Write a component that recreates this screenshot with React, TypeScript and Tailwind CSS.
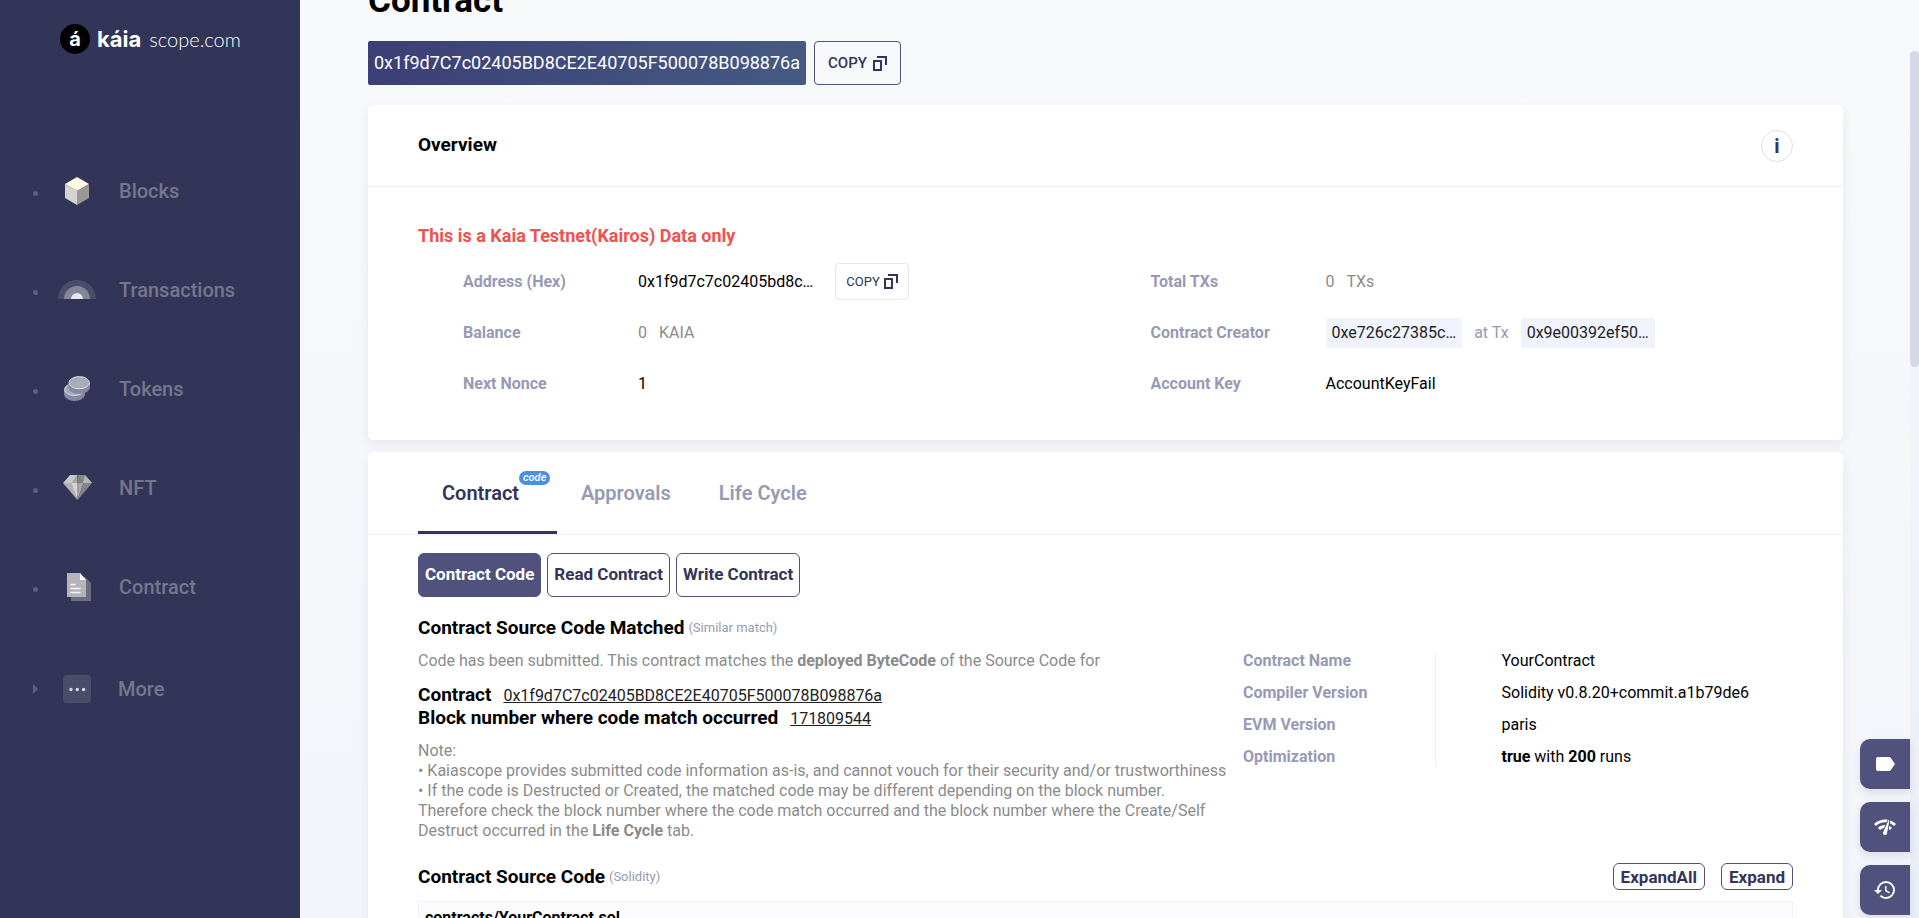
import React from "react";
import { MdHistory, MdLabel, MdNetworkCheck } from "react-icons/md";

const HASH = "0x1f9d7C7c02405BD8CE2E40705F500078B098876a";

function Logo() {
  return (
    <a href="#home" aria-label="kaiascope.com" className="flex h-[30px] items-center text-white">
      <span className="flex size-[30px] items-center justify-center rounded-full bg-black">
        <span className="font-[Inter] text-xl leading-6 font-bold">á</span>
      </span>
      <span className="ml-[7px] font-[Inter] text-[22px] leading-6 font-bold">káia</span>
      <span className="ml-2 font-[Lato] text-xl leading-6 font-light">scope.com</span>
    </a>
  );
}

function BlockIcon() {
  return (
    <svg width="24" height="28" viewBox="0 0 24 28">
      <path d="M12 0 24 7 12 14 0 7Z" fill="#fff8e3" />
      <path d="M0 7 12 14V28L0 21Z" fill="#d4d3d1" />
      <path d="M24 7 12 14V28L24 21Z" fill="#999896" />
    </svg>
  );
}

function TransactionIcon() {
  return (
    <svg width="38" height="20" viewBox="0 0 38 20">
      <path d="M0 19a19 19 0 0 1 38 0Z" fill="#4b4e6b" />
      <path d="M6 19a13 13 0 0 1 26 0Z" fill="#84869a" />
      <path d="M13 19a6 6 0 0 1 12 0Z" fill="#e6e6ea" />
    </svg>
  );
}

function TokenIcon() {
  return (
    <svg width="26" height="25" viewBox="0 0 26 25">
      <path d="M0 14v4c0 4 5 7 10.500 7S21 22 21 18v-4Z" fill="#8688a0" />
      <ellipse cx="10.500" cy="13.500" rx="10" ry="6" fill="#a9abbb" stroke="#dcdce3" />
      <path d="M4.500 7v4c0 4 4.500 7 10.500 7s11-3 11-7V7Z" fill="#8688a0" />
      <ellipse cx="15.200" cy="6.700" rx="10.200" ry="6.100" fill="#a9abbb" stroke="#dcdce3" />
    </svg>
  );
}

function GemIcon() {
  return (
    <svg width="29" height="25" viewBox="0 0 29 25">
      <path d="M7 0 0 8h9L14.500 0Z" fill="#c9c9c9" />
      <path d="M14.500 0H22l7 8h-9Z" fill="#8a8a8a" />
      <path d="M22 0 29 8h-9Z" fill="#b5b5b5" />
      <path d="M14.500 0 8.500 8h6Z" fill="#a9a9a9" />
      <path d="M14.500 0 20.500 8h-6Z" fill="#7f7f7f" />
      <path d="M0 8h9l5.500 17Z" fill="#b3b3b3" />
      <path d="M8.500 8h6v17Z" fill="#d6d6d6" />
      <path d="M20.500 8h-6v17Z" fill="#a6a6a6" />
      <path d="M29 8h-8.500l-6 17Z" fill="#858585" />
    </svg>
  );
}

function DocumentIcon() {
  return (
    <svg width="28" height="28" viewBox="-4 0 28 28">
      <path d="M4 4h14l6 6v18H4Z" fill="#6b6d83" />
      <path d="M0 0h13l6 7v17H0Z" fill="#b4b4ba" />
      <path d="M13 0l6 7h-6Z" fill="#fff" />
      <path d="M4 11.500h4M4 15.500h9M4 19.500h9" stroke="#f4f4f6" strokeWidth="1.500" strokeLinecap="round" />
    </svg>
  );
}

function MoreIcon() {
  return (
    <svg width="28" height="28" viewBox="0 0 28 28">
      <rect width="28" height="28" rx="4" fill="#4a4d6a" />
      <circle cx="8" cy="14.500" r="1.700" fill="#d9dae1" />
      <circle cx="14.300" cy="14.500" r="1.700" fill="#d9dae1" />
      <circle cx="20.600" cy="14.500" r="1.700" fill="#d9dae1" />
    </svg>
  );
}

const NAV = [
  { label: "Blocks", icon: <BlockIcon /> },
  { label: "Transactions", icon: <TransactionIcon /> },
  { label: "Tokens", icon: <TokenIcon /> },
  { label: "NFT", icon: <GemIcon /> },
  { label: "Contract", icon: <DocumentIcon /> },
];

function Sidebar() {
  return (
    <aside className="w-[300px] shrink-0 bg-[#323557]">
      <div className="pt-6 pl-[60px]">
        <Logo />
      </div>
      <nav className="mt-[87px] pl-[33px] text-xl font-medium text-[#75778d]">
        <ul>
          {NAV.map((item) => (
            <li key={item.label}>
              <a href="#nav" className="flex h-[99px] items-center">
                <span className="mt-1.5 size-[5px] rounded-full bg-[#5e607b]" />
                <span className="ml-5 flex w-[38px] justify-center">{item.icon}</span>
                <span className="ml-[23px]">{item.label}</span>
              </a>
            </li>
          ))}
          <li>
            <button type="button" className="flex h-[106px] items-center">
              <svg width="5" height="10" viewBox="0 0 5 10">
                <path d="M0 0 5 5 0 10Z" fill="#5e607b" />
              </svg>
              <span className="ml-5 flex w-[38px] justify-center">
                <MoreIcon />
              </span>
              <span className="ml-[22px]">More</span>
            </button>
          </li>
        </ul>
      </nav>
    </aside>
  );
}

function CopyIcon() {
  return (
    <svg width="14" height="15" viewBox="0 0 14 15" fill="none" stroke="#323557" strokeWidth="2">
      <rect x="1" y="5" width="7" height="9" />
      <path d="M4 1h9v8" />
    </svg>
  );
}

function Row({ label, children }: { label: string; children: React.ReactNode }) {
  return (
    <div className="flex h-[51px] items-center">
      <dt className="w-[175px] font-bold text-[#979ab4]">{label}</dt>
      <dd className="flex items-center text-black">{children}</dd>
    </div>
  );
}

function Overview() {
  return (
    <section className="rounded-md bg-white pb-[31px] shadow-[0_4px_12px_rgba(50,53,87,0.08)]">
      <header className="flex h-[82px] items-center justify-between border-b border-[#eff0f2] px-[50px]">
        <h2 className="text-[19px] font-bold">Overview</h2>
        <button
          type="button"
          aria-label="Information"
          className="flex size-8 items-center justify-center rounded-full border border-[#e0e1e8] text-xl font-bold text-[#323557]"
        >
          i
        </button>
      </header>
      <div className="px-[50px] pt-[37px]">
        <p className="mb-2 text-lg leading-6 font-bold text-[#f0524f]">This is a Kaia Testnet(Kairos) Data only</p>
        <div className="grid grid-cols-2">
          <dl className="pl-[45px]">
            <Row label="Address (Hex)">
              0x1f9d7c7c02405bd8c…
              <button
                type="button"
                className="ml-[22px] flex h-[37px] items-center gap-1 rounded-sm border border-[#e4e4f2] px-2.5 text-[13px] text-[#323557]"
              >
                COPY
                <CopyIcon />
              </button>
            </Row>
            <Row label="Balance">
              <span className="text-[#8b8b8b]">0</span>
              <span className="ml-3 text-[#8b8b8b]">KAIA</span>
            </Row>
            <Row label="Next Nonce">1</Row>
          </dl>
          <dl className="pl-[45px]">
            <Row label="Total TXs">
              <span className="text-[#8b8b8b]">0</span>
              <span className="ml-3 text-[#8b8b8b]">TXs</span>
            </Row>
            <Row label="Contract Creator">
              <a href="#creator" className="rounded-xs bg-[#f0f2fc] px-1.5 leading-[30px] text-[#222]">
                0xe726c27385c…
              </a>
              <span className="mx-3 text-[#979ab4]">at Tx</span>
              <a href="#tx" className="rounded-xs bg-[#f0f2fc] px-1.5 leading-[30px] text-[#222]">
                0x9e00392ef50…
              </a>
            </Row>
            <Row label="Account Key">AccountKeyFail</Row>
          </dl>
        </div>
      </div>
    </section>
  );
}

function Tabs() {
  return (
    <div role="tablist" className="flex h-[83px] border-b border-[#eff0f2] px-[50px] text-xl font-semibold">
      <button
        type="button"
        role="tab"
        aria-selected="true"
        className="relative w-[139px] border-b-3 border-[#323557] pt-[3px] pl-6 text-left text-[#323557]"
      >
        Contract
        <span className="absolute top-[19px] left-[101px] rounded-full bg-[#4a90e2] px-1 text-[11px] leading-[14px] font-medium text-white italic">
          code
        </span>
      </button>
      <button type="button" role="tab" aria-selected="false" className="px-6 text-[#979ab4]">
        Approvals
      </button>
      <button type="button" role="tab" aria-selected="false" className="px-6 text-[#979ab4]">
        Life Cycle
      </button>
    </div>
  );
}

const DETAILS: [string, React.ReactNode][] = [
  ["Contract Name", "YourContract"],
  ["Compiler Version", "Solidity v0.8.20+commit.a1b79de6"],
  ["EVM Version", "paris"],
  [
    "Optimization",
    <>
      <b>true</b> with <b>200</b> runs
    </>,
  ],
];

function ContractCard() {
  return (
    <section className="mt-3 rounded-md bg-white pb-10 shadow-[0_4px_12px_rgba(50,53,87,0.08)]">
      <Tabs />
      <div className="px-[50px] pt-[18px]">
        <div className="flex gap-1.5 text-[17px] font-bold text-[#323557]">
          <button type="button" className="h-11 rounded-md border border-[#50517d] bg-[#50517d] px-1.5 text-white">
            Contract Code
          </button>
          <button type="button" className="h-11 rounded-md border border-[#50517d] px-1.5">
            Read Contract
          </button>
          <button type="button" className="h-11 rounded-md border border-[#50517d] px-1.5">
            Write Contract
          </button>
        </div>

        <h3 className="mt-[19px] flex items-center text-[19px] leading-6 font-bold">
          Contract Source Code Matched
          <small className="ml-1 text-[13px] font-normal text-[#979ab4]">(Similar match)</small>
        </h3>

        <div className="mt-[11px] flex">
          <div className="w-3/5 text-[#8b8b8b]">
            <p className="leading-5">
              Code has been submitted. This contract matches the <b>deployed ByteCode</b> of the Source Code for
            </p>
            <div className="mt-3 text-[19px] leading-[23px] font-bold text-black">
              <p>
                Contract
                <a href="#contract" className="ml-3 text-base leading-none font-normal text-[#222] underline">
                  {HASH}
                </a>
              </p>
              <p>
                Block number where code match occurred
                <a href="#block" className="ml-3 text-base leading-none font-normal text-[#222] underline">
                  171809544
                </a>
              </p>
            </div>
            <div className="mt-3 leading-5 whitespace-nowrap">
              <p>Note:</p>
              <p>• Kaiascope provides submitted code information as-is, and cannot vouch for their security and/or trustworthiness</p>
              <p>• If the code is Destructed or Created, the matched code may be different depending on the block number.</p>
              <p>
                Therefore check the block number where the code match occurred and the block number where the Create/Self
                <br />
                Destruct occurred in the <b>Life Cycle</b> tab.
              </p>
            </div>
          </div>
          <dl className="w-2/5 text-base">
            {DETAILS.map(([name, value]) => (
              <div key={name} className="group flex">
                <dt className="w-[35%] border-r border-[#eff0f2] pb-3 leading-5 font-bold text-[#979ab4] group-last:pb-0">
                  {name}
                </dt>
                <dd className="pl-[66px] leading-5 text-black">{value}</dd>
              </div>
            ))}
          </dl>
        </div>

        <div className="mt-[22px] flex items-center">
          <h3 className="flex items-center text-[19px] leading-6 font-bold">
            Contract Source Code
            <small className="ml-1 text-[13px] font-normal text-[#979ab4]">(Solidity)</small>
          </h3>
          <div className="ml-auto flex gap-4 text-[17px] font-bold text-[#323557]">
            <button type="button" className="h-[27px] rounded-md border border-[#50517d] px-[7px] leading-6">
              ExpandAll
            </button>
            <button type="button" className="h-[27px] rounded-md border border-[#50517d] px-[7px] leading-6">
              Expand
            </button>
          </div>
        </div>

        <div className="mt-[11px] border border-[#f0f1fa] bg-[#fcfcfe] px-1.5 pt-1 pb-40">
          <h4 className="text-base leading-6 font-bold">contracts/YourContract.sol</h4>
        </div>
      </div>
    </section>
  );
}

function SideTools() {
  const style =
    "flex size-[50px] items-center justify-center rounded-l-[10px] bg-[#50517d] text-2xl text-white shadow-[0_4px_8px_rgba(50,53,87,0.12)]";
  return (
    <div className="absolute right-[9px] bottom-[3px] flex flex-col gap-[13px]">
      <button type="button" aria-label="Labels" className={style}>
        <MdLabel />
      </button>
      <button type="button" aria-label="Network" className={style}>
        <MdNetworkCheck />
      </button>
      <button type="button" aria-label="History" className={style}>
        <MdHistory />
      </button>
    </div>
  );
}

export default function App() {
  return (
    <div className="relative flex h-screen overflow-hidden bg-linear-to-b from-[#f8f9fb] to-[#f3f5fa] font-[Roboto,sans-serif] text-base text-black">
      <Sidebar />
      <main className="min-w-0 flex-1 pr-[67px] pl-[68px]">
        <h1 className="-mt-4 text-[35px] leading-[34px] font-bold">Contract</h1>
        <div className="mt-[23px] mb-5 flex gap-2">
          <div className="flex h-11 items-center rounded-xs bg-linear-to-r from-[#3c3f76] to-[#455a82] px-1.5 text-lg text-white">
            {HASH}
          </div>
          <button
            type="button"
            className="flex h-11 items-center gap-1.5 rounded-sm border border-[#50517d] px-[13px] text-[15px] font-medium text-[#323557]"
          >
            COPY
            <CopyIcon />
          </button>
        </div>
        <Overview />
        <ContractCard />
      </main>
      <div className="w-[9px] shrink-0 bg-linear-to-b from-[#f8f9fb] to-[#eaeef8] pt-[51px]">
        <div className="h-[316px] rounded-full bg-[#d5d8e8]" />
      </div>
      <SideTools />
    </div>
  );
}
